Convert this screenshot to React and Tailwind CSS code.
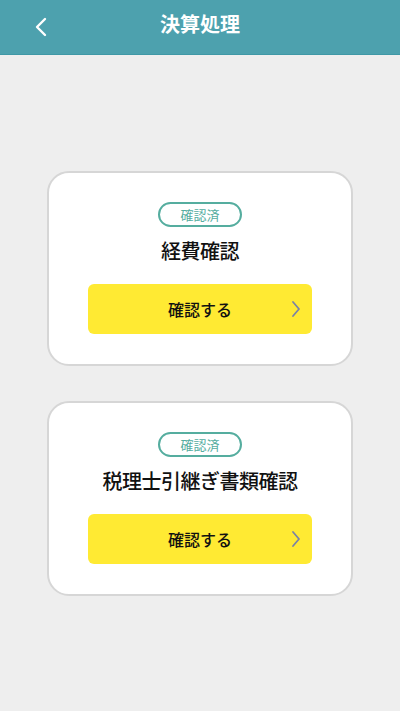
import { useState } from "react"

const items = [
    { title: "経費確認", status: "確認済" },
    { title: "税理士引継ぎ書類確認", status: "確認済" },
]

export default function App() {
    const [list] = useState(items);

    return <div className="min-h-[711px] bg-[#eeeeee]" style={{ fontFamily: '"Noto Sans CJK JP", "Noto Sans", sans-serif' }}>
        <div className="h-[55px] bg-[#4da1ae] border-b border-[#3f98a6] flex items-center relative">
            <button className="absolute left-[33px] top-[17px] w-[16px] h-[20px]">
                <svg width="16" height="20" viewBox="0 0 16 20" fill="none">
                    <path d="M12 2 L4 10 L12 18" stroke="white" strokeWidth="2.4" strokeLinecap="round" strokeLinejoin="round" />
                </svg>
            </button>
            <div className="w-full text-center text-white font-bold text-[20px] leading-none -mt-[6px]">
                決算処理
            </div>
        </div>

        <div className="px-[47px] pt-[116px] flex flex-col gap-[35px]">
            {list.map((item, i) => <Card key={i} item={item} />)}
        </div>
    </div>
}

function Card({ item }) {
    return <div className="bg-white border-2 border-[#d6d6d6] rounded-[22px] h-[195px] flex flex-col items-center pt-[29px]">
        <div className="w-[84px] h-[25px] rounded-full border-2 border-[#55ad9f] text-[#55ad9f] text-[13px] flex items-center justify-center leading-none">
            {item.status}
        </div>
        <div className="mt-[14px] text-[20px] font-medium text-[#111] leading-none tracking-[-0.5px]">
            {item.title}
        </div>
        <button className="mt-[23px] w-[224px] h-[50px] bg-[#ffea33] rounded-[6px] relative flex items-center justify-center">
            <span className="text-[16px] font-medium text-[#111] leading-none">確認する</span>
            <svg className="absolute right-[10px] top-[16px]" width="12" height="18" viewBox="0 0 12 18" fill="none">
                <path d="M3 2 L9 9 L3 16" stroke="#7a83a6" strokeWidth="1.8" strokeLinecap="round" strokeLinejoin="round" />
            </svg>
        </button>
    </div>
}
